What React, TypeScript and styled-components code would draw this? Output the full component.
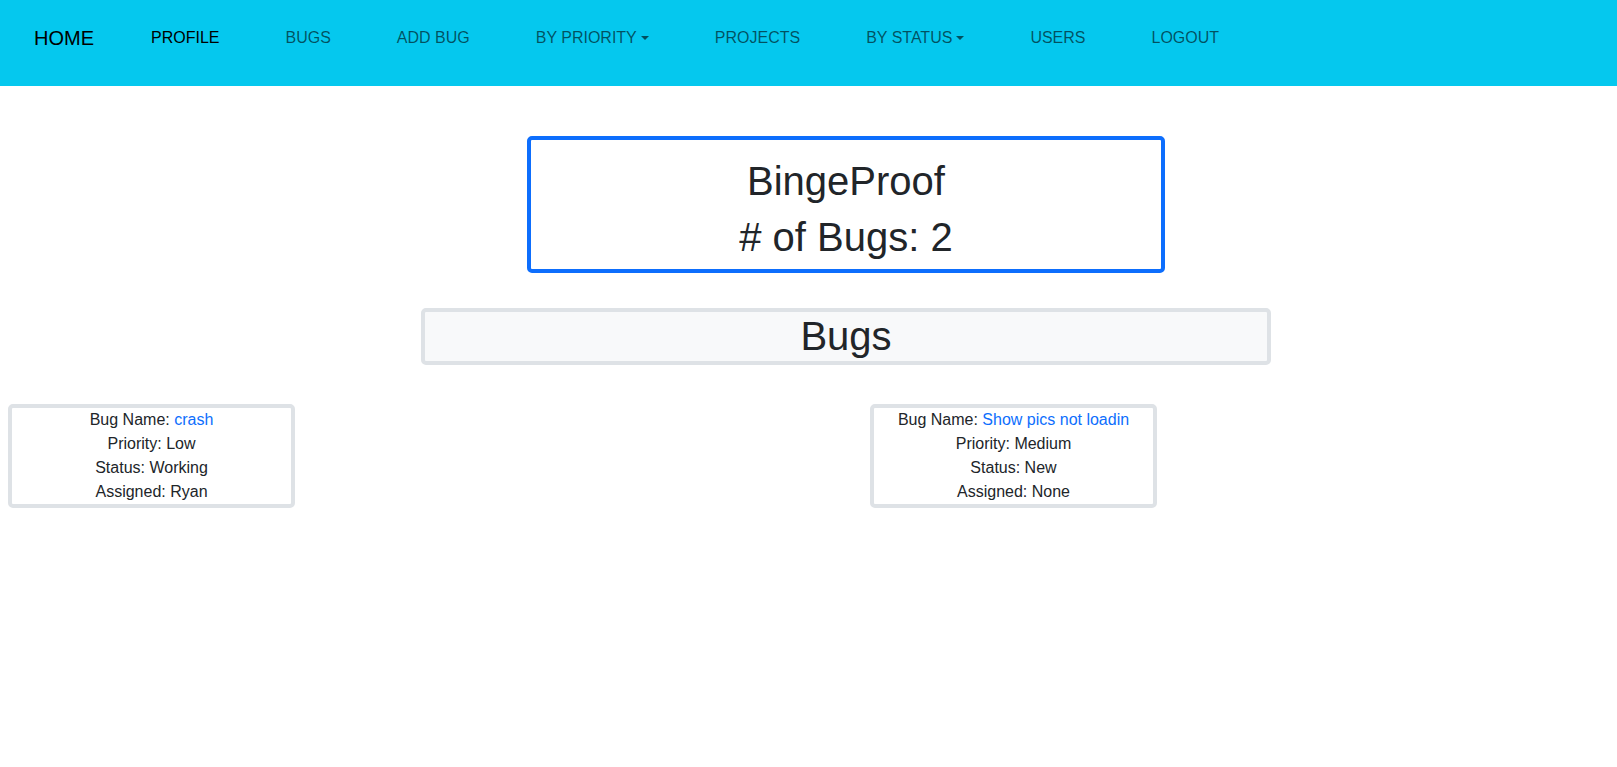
import { createGlobalStyle } from "styled-components";
import styled from "styled-components";

const GlobalStyle = createGlobalStyle`
  body {
    margin: 0;
    font-family: "Liberation Sans", Arial, sans-serif;
    color: #212529;
    background: #fff;
  }
`;

const bugs = [
  { name: "crash", priority: "Low", status: "Working", assigned: "Ryan" },
  { name: "Show pics not loadin", priority: "Medium", status: "New", assigned: "None" },
];

const links = [
  { label: "PROFILE", active: true },
  { label: "BUGS" },
  { label: "ADD BUG" },
  { label: "BY PRIORITY", dropdown: true },
  { label: "PROJECTS" },
  { label: "BY STATUS", dropdown: true },
  { label: "USERS" },
  { label: "LOGOUT" },
];

const Navbar = styled.nav`
  display: flex;
  align-items: center;
  height: 86px;
  box-sizing: border-box;
  padding: 23px 0 33px 34px;
  background: #05c8ee;
`;

const Brand = styled.a`
  font-size: 20px;
  line-height: 30px;
  color: #000;
  text-decoration: none;
  margin-right: 57px;
`;

const NavList = styled.div`
  display: flex;
  align-items: center;
  gap: 66px;
`;

const NavLink = styled.a<{ $active?: boolean }>`
  font-size: 16px;
  line-height: 24px;
  color: ${(p) => (p.$active ? "#000" : "rgba(0, 0, 0, 0.6)")};
  text-decoration: none;
  white-space: nowrap;
`;

const Caret = styled.span`
  display: inline-block;
  margin-left: 4px;
  vertical-align: 3px;
  border-top: 4.8px solid;
  border-right: 4.8px solid transparent;
  border-left: 4.8px solid transparent;
`;

const Main = styled.main`
  display: flex;
  flex-direction: column;
  padding-top: 50px;
`;

const Centered = styled.div`
  display: flex;
  flex-direction: column;
  align-items: center;
  padding-left: 75px;
`;

const ProjectBox = styled.div`
  width: 638px;
  box-sizing: border-box;
  border: 4px solid #0d6efd;
  border-radius: 5px;
  padding-top: 17px;
  text-align: center;
`;

const Heading = styled.h1`
  margin: 0 0 8px;
  font-size: 40px;
  font-weight: 400;
  line-height: 48px;
`;

const SectionBox = styled.div`
  width: 850px;
  box-sizing: border-box;
  margin-top: 35px;
  border: 4px solid #dee2e6;
  border-radius: 5px;
  background: #f8f9fa;
  text-align: center;
  height: 57px;
`;

const SectionTitle = styled.h1`
  margin: 0;
  font-size: 40px;
  font-weight: 400;
  line-height: 49px;
`;

const BugGrid = styled.div`
  display: grid;
  grid-template-columns: 287px 287px;
  column-gap: 575px;
  padding-left: 8px;
  margin-top: 39px;
`;

const BugCard = styled.div`
  box-sizing: border-box;
  border: 4px solid #dee2e6;
  border-radius: 5px;
  text-align: center;
  font-size: 16px;
  line-height: 24px;
  color: #212529;
`;

const BugLink = styled.a`
  color: #0d6efd;
  text-decoration: none;
`;

export default function App() {
  return (
    <>
      <GlobalStyle />
      <Navbar>
        <Brand href="#">HOME</Brand>
        <NavList>
          {links.map((l) => (
            <NavLink key={l.label} href="#" $active={l.active}>
              {l.label}
              {l.dropdown && <Caret />}
            </NavLink>
          ))}
        </NavList>
      </Navbar>
      <Main>
        <Centered>
          <ProjectBox>
            <Heading>BingeProof</Heading>
            <Heading># of Bugs: 2</Heading>
          </ProjectBox>
          <SectionBox>
            <SectionTitle>Bugs</SectionTitle>
          </SectionBox>
        </Centered>
        <BugGrid>
          {bugs.map((b) => (
            <BugCard key={b.name}>
              <div>
                Bug Name: <BugLink href="#">{b.name}</BugLink>
              </div>
              <div>Priority: {b.priority}</div>
              <div>Status: {b.status}</div>
              <div>Assigned: {b.assigned}</div>
            </BugCard>
          ))}
        </BugGrid>
      </Main>
    </>
  );
}
